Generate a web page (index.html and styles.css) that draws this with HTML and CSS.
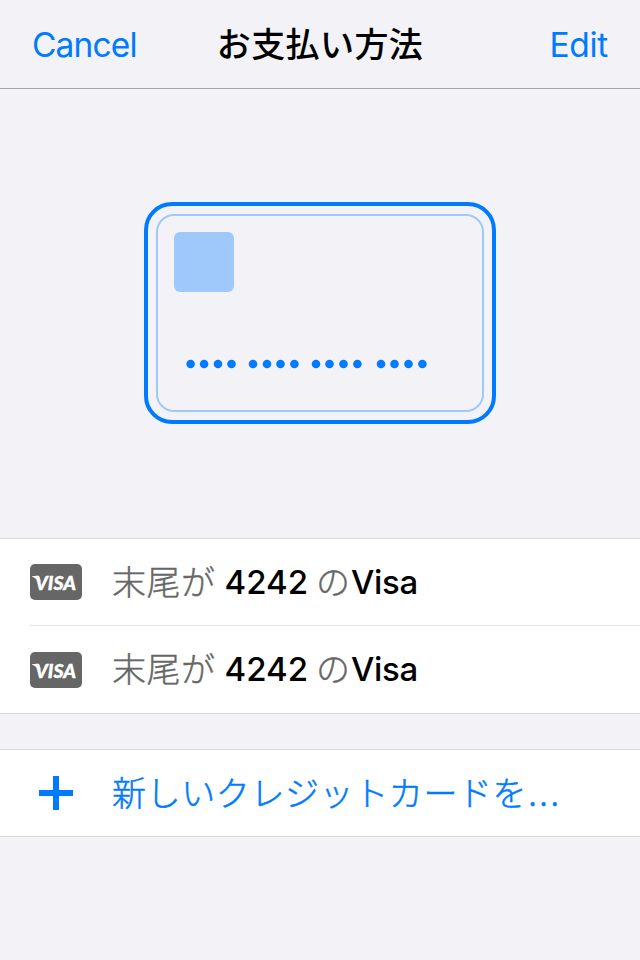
FILE: index.html
```html
<!DOCTYPE html>
<html lang="ja">
<head>
<meta charset="utf-8">
<title>お支払い方法</title>
<link rel="stylesheet" href="styles.css">
</head>
<body>
<header class="navbar">
  <a class="cancel">Cancel</a>
  <h1 class="title">お支払い方法</h1>
  <a class="edit">Edit</a>
</header>
<main>
  <section class="hero">
    <svg class="card" viewBox="0 0 352 222" fill="none">
      <rect x="2" y="2" width="348" height="218" rx="26" stroke="#007aff" stroke-width="4"/>
      <rect x="13" y="13" width="326" height="196" rx="17" stroke="#9fc9fa" stroke-width="2"/>
      <rect x="30" y="30" width="60" height="60" rx="6" fill="#9fc9fa"/>
      <g fill="#007aff">
        <circle cx="46.6" cy="162" r="4.3"/><circle cx="60.1" cy="162" r="4.3"/><circle cx="74" cy="162" r="4.3"/><circle cx="87.5" cy="162" r="4.3"/>
        <circle cx="109" cy="162" r="4.3"/><circle cx="123" cy="162" r="4.3"/><circle cx="136.5" cy="162" r="4.3"/><circle cx="150.4" cy="162" r="4.3"/>
        <circle cx="172" cy="162" r="4.3"/><circle cx="185.5" cy="162" r="4.3"/><circle cx="199.5" cy="162" r="4.3"/><circle cx="213.4" cy="162" r="4.3"/>
        <circle cx="237" cy="162" r="4.3"/><circle cx="250.5" cy="162" r="4.3"/><circle cx="264.5" cy="162" r="4.3"/><circle cx="278.4" cy="162" r="4.3"/>
      </g>
    </svg>
  </section>
  <ul class="group">
    <li class="row">
      <svg class="visa" viewBox="0 0 52 36"><rect width="52" height="36" rx="5" fill="#666"/><path d="M2.3 12H8l2.5 4-.5 4Q7 14.5 2.3 12.8Z" fill="#fff"/><text class="visa-text" x="5" y="26" textLength="41" lengthAdjust="spacingAndGlyphs">VISA</text></svg>
      <div class="label"><span class="ja">末尾が</span><span class="digits">4242</span><span class="no">の</span><span class="brand">Visa</span></div>
    </li>
    <li class="row">
      <svg class="visa" viewBox="0 0 52 36"><rect width="52" height="36" rx="5" fill="#666"/><path d="M2.3 12H8l2.5 4-.5 4Q7 14.5 2.3 12.8Z" fill="#fff"/><text class="visa-text" x="5" y="26" textLength="41" lengthAdjust="spacingAndGlyphs">VISA</text></svg>
      <div class="label"><span class="ja">末尾が</span><span class="digits">4242</span><span class="no">の</span><span class="brand">Visa</span></div>
    </li>
  </ul>
  <ul class="group add-group">
    <li class="row add">
      <svg class="plus" viewBox="0 0 52 36"><path d="M9 18h34M26 1v34" stroke="#007aff" stroke-width="6"/></svg>
      <div class="label add-label">新しいクレジットカードを<span class="dots">...</span></div>
    </li>
  </ul>
</main>
</body>
</html>
```
FILE: styles.css
```css
* { box-sizing: border-box; }
body {
  margin: 0;
  height: 960px;
  background: #f2f2f7;
  font-family: Inter, "Noto Sans CJK JP", sans-serif;
  font-size: 34px;
  color: #000;
}
.navbar {
  display: grid;
  grid-template-columns: 1fr auto 1fr;
  align-items: center;
  height: 89px;
  padding: 0 32px;
  border-bottom: 1px solid #a7a7ab;
}
.cancel, .edit { color: #007aff; font-size: 33.5px; line-height: 40px; padding-top: 1px; }
.cancel { letter-spacing: -0.85px; }
.edit { text-align: right; letter-spacing: -0.3px; }
.title {
  margin: 0;
  padding-bottom: 2px;
  font: 500 34px/40px "Noto Sans CJK JP", sans-serif;
  letter-spacing: 0.4px;
}
.hero {
  display: flex;
  justify-content: center;
  height: 449px;
  padding-top: 113px;
}
.card { width: 352px; height: 222px; }
.group {
  margin: 0;
  padding: 0;
  list-style: none;
  background: #fff;
  border-top: 1px solid #d9d8dd;
  border-bottom: 1px solid #d9d8dd;
}
.add-group { margin-top: 35px; }
.row {
  display: flex;
  align-items: center;
  height: 86px;
  margin-left: 30px;
}
.row + .row { height: 88px; border-top: 1px solid #e4e4e6; }
.visa, .plus { width: 52px; height: 36px; flex: none; }
.row + .row .visa { margin-top: 1px; }
.visa-text {
  font: italic 900 19.5px Lato, sans-serif;
  fill: #fff;
  stroke: #fff;
  stroke-width: 0.4px;
}
.label {
  display: flex;
  align-items: baseline;
  margin-left: 30px;
  line-height: 44px;
  white-space: nowrap;
}
.ja, .no {
  color: #666;
  font-family: "Noto Sans CJK JP", sans-serif;
  font-weight: 300;
  -webkit-text-stroke: 0.4px;
}
.ja { letter-spacing: 0.5px; }
.digits, .brand { padding-bottom: 1px; margin-top: -1px; font-size: 33px; font-weight: 500; transform: translateY(-1px); }
.digits { margin-left: 9px; letter-spacing: 0; }
.no { margin-left: 8px; }
.brand { margin-left: 1px; letter-spacing: -0.3px; }
.add-label {
  margin-top: -3px;
  color: #007aff;
  font-family: "Noto Sans CJK JP", sans-serif;
  font-weight: 300;
  letter-spacing: 0.6px;
  -webkit-text-stroke: 0.5px;
}
.dots { margin-left: 1px; letter-spacing: 2.6px; }
```
